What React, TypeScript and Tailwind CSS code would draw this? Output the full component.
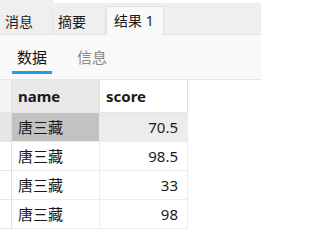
import React from "react";

const rows = [
  { name: "唐三藏", score: "70.5" },
  { name: "唐三藏", score: "98.5" },
  { name: "唐三藏", score: "33" },
  { name: "唐三藏", score: "98" },
];

const cjk = { fontFamily: '"Segoe UI", "Noto Sans", "Noto Sans CJK SC", sans-serif' };

export default function App() {
  return (
    <div className="w-[261px] h-[243px] bg-white overflow-hidden text-[#1a1a1a]" style={cjk}>
      {/* top strip */}
      <div className="flex h-[3px]">
        <div className="w-[53px] bg-[#efefef]" />
        <div className="flex-1 bg-white" />
      </div>

      {/* result tabs */}
      <div className="flex items-end h-[32px] bg-[#efefef] border-b border-[#e2e2e2]">
        <div className="w-[53px] h-[25px] flex items-center pl-[5px] text-[14px] leading-none border-r border-[#e2e2e2]">消息</div>
        <div className="w-[53px] h-[25px] flex items-center pl-[5px] text-[14px] leading-none border-r border-[#e2e2e2]">摘要</div>
        <div className="w-[58px] h-[29px] -mb-px flex items-center pl-[7px] text-[14px] leading-none bg-[#f9f9f9] border border-b-0 border-[#e2e2e2]">结果 1</div>
      </div>

      {/* sub tabs */}
      <div className="h-[45px] bg-[#f9f9f9] border-b border-[#e6e6e6] flex items-start pl-[12px] pt-[11px]">
        <div className="flex flex-col items-center w-[40px]">
          <span className="text-[15px] leading-[22px] text-[#111]">数据</span>
          <div className="mt-[3px] h-[3px] w-[40px] bg-[#1ba1e2]" />
        </div>
        <span className="ml-[25px] text-[15px] leading-[22px] text-[#8a8a8a]">信息</span>
      </div>

      {/* grid */}
      <div className="flex">
        <div className="w-[12px] flex flex-col border-r border-[#e0e0e0]">
          <div className="h-[33px] bg-[#f4f4f4] border-b border-[#e6e6e6]" />
          <div className="h-[29px] bg-[#e6e6e6] border-b border-[#e6e6e6]" />
          <div className="h-[29px] border-b border-[#e6e6e6]" />
          <div className="h-[29px] border-b border-[#e6e6e6]" />
          <div className="h-[29px] border-b border-[#e6e6e6]" />
        </div>
        <div className="w-[176px] flex flex-col">
          <div className="flex h-[33px] border-b border-[#e6e6e6]">
            <div className="w-[88px] bg-[#e9e9e9] border-r border-[#dcdcdc] flex items-center pl-[6px] text-[15px] font-bold">name</div>
            <div className="w-[88px] bg-white border-r border-[#dcdcdc] flex items-center pl-[6px] text-[15px] font-bold">score</div>
          </div>
          {rows.map((r, i) => (
            <div key={i} className={`flex h-[29px] border-b border-[#ececec] ${i === 0 ? "bg-[#ececec]" : "bg-white"}`}>
              <div className={`w-[88px] border-r border-[#ececec] flex items-center pl-[6px] text-[15px] ${i === 0 ? "bg-[#c2c2c2]" : ""}`}>{r.name}</div>
              <div className="w-[88px] border-r border-[#ececec] flex items-center justify-end pr-[9px] text-[15px]">{r.score}</div>
            </div>
          ))}
        </div>
      </div>
    </div>
  );
}
